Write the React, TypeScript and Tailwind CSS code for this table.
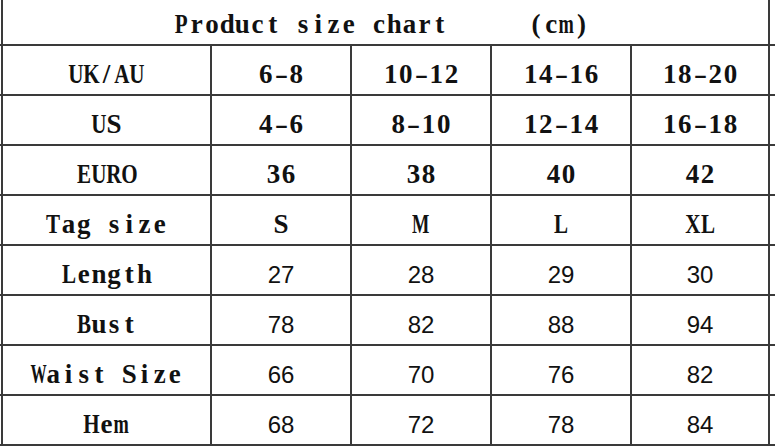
const rows: { label: string; values: string[]; sans?: boolean }[] = [
  { label: "UK/AU", values: ["6-8", "10-12", "14-16", "18-20"] },
  { label: "US", values: ["4-6", "8-10", "12-14", "16-18"] },
  { label: "EURO", values: ["36", "38", "40", "42"] },
  { label: "Tag size", values: ["S", "M", "L", "XL"] },
  { label: "Length", values: ["27", "28", "29", "30"], sans: true },
  { label: "Bust", values: ["78", "82", "88", "94"], sans: true },
  { label: "Waist Size", values: ["66", "70", "76", "82"], sans: true },
  { label: "Hem", values: ["68", "72", "78", "84"], sans: true },
]

const serif = "font-['Liberation_Serif','Times_New_Roman',serif] font-bold text-[27px] text-[#111]"
const sans = "font-['Liberation_Sans',Arial,sans-serif] text-[24px] text-[#111]"

// fixed-width cells so the serif reads like the half-width latin of the original
function Mono({ text }: { text: string }) {
  return (
    <span className="inline-flex">
      {[...text].map((c, i) => {
        let fit = ""
        if (c === "W") fit = "scale-x-[0.6]"
        else if (c === "M" || c === "m") fit = "scale-x-[0.68]"
        else if (c === "-") fit = "scale-x-[1.5]"
        else if (/[A-RT-Z]/.test(c)) fit = "scale-x-[0.78]"
        return (
          <span key={i} className="inline-flex justify-center w-[15.2px]">
            <span className={`inline-block ${fit}`}>{c === " " ? "\u00a0" : c}</span>
          </span>
        )
      })}
    </span>
  )
}

export default function App() {
  return (
    <div className="w-[775px] h-[448px] bg-white overflow-hidden">
      <div className="flex h-[46px] border-b-2 border-[#3a3a3a]">
        <div className="w-[1px]" />
        <div className={`w-[769px] flex items-center gap-[81px] pl-[171px] pt-[5px] border-x-2 border-[#3a3a3a] ${serif}`}>
          <Mono text="Product size chart" />
          <Mono text="(cm)" />
        </div>
      </div>
      {rows.map((row) => (
        <div key={row.label} className="flex h-[50px] border-b-2 border-[#3a3a3a]">
          <div className="w-[1px]" />
          <div className={`w-[209px] flex items-center justify-center pt-[8px] border-l-2 border-[#3a3a3a] ${serif}`}>
            <Mono text={row.label} />
          </div>
          {row.values.map((v, i) => (
            <div
              key={i}
              className={`w-[140px] flex items-center justify-center ${row.sans ? "pt-[9px]" : "pt-[8px]"} border-l-2 border-[#3a3a3a] ${i === 3 ? "border-r-2" : ""} ${row.sans ? sans : serif}`}
            >
              {row.sans ? v : <Mono text={v} />}
            </div>
          ))}
        </div>
      ))}
    </div>
  )
}
